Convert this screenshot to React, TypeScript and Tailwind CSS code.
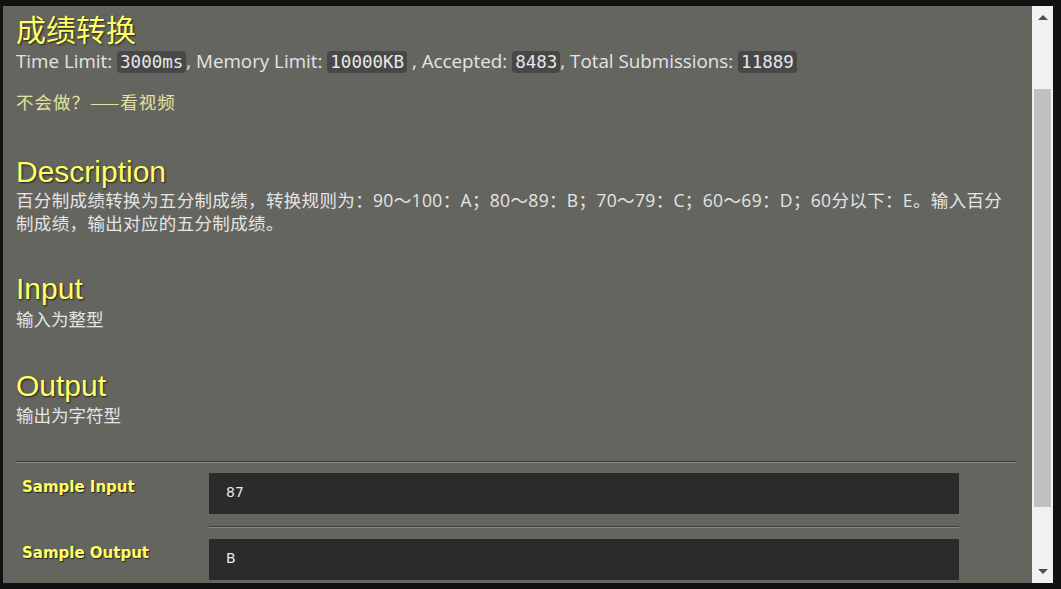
import React from "react";

const heading = "font-['Liberation_Sans',Arial,sans-serif] text-[30px] leading-[32px] text-[#ffff66] [text-shadow:1px_1px_2px_#1e1e1e]";
const body = "font-['Open_Sans','Noto_Sans_CJK_SC',sans-serif] text-[17.5px] text-[#e4e4e4]";
const badge = "inline-block rounded-[4px] bg-[#474747] px-[3px] py-[1px] font-['DejaVu_Sans_Mono',monospace] text-[17.5px] leading-[20px] text-[#e8e8e8]";
const label = "pl-[6px] pt-[4px] font-['DejaVu_Sans',sans-serif] text-[15px] font-bold leading-[20px] text-[#ffff66] [text-shadow:1px_1px_1px_#222]";
const sample = "bg-[#2b2b2b] pl-[17px] pt-[9px] font-['DejaVu_Sans',sans-serif] text-[14px] leading-[20px] text-[#e8e8e8]";
const rule = "h-[2px] border-t border-b border-t-[#3e3e3a] border-b-[#8a8a84]";

function Badge({ children }: { children: React.ReactNode }) {
  return <code className={badge}>{children}</code>;
}

function Scrollbar() {
  return (
    <div className="relative w-[21px] shrink-0 bg-[#f1f1f1]">
      <div className="absolute left-1/2 top-[9px] -translate-x-1/2 h-0 w-0 border-x-[5px] border-b-[5px] border-x-transparent border-b-[#505050]" />
      <div className="absolute left-[2px] right-[2px] top-[83px] h-[418px] bg-[#c1c1c1]" />
      <div className="absolute left-1/2 bottom-[9px] -translate-x-1/2 h-0 w-0 border-x-[5px] border-t-[5px] border-x-transparent border-t-[#505050]" />
    </div>
  );
}

export default function App() {
  return (
    <div className="flex h-[589px] w-[1061px] bg-[#111111] pt-[6px] pb-[6px] pl-[3px] pr-[8px]">
      <div className="flex-1 overflow-hidden bg-[#656560] pl-[13px] pr-[16px] pt-[6px]">
        <h1 className={heading + " font-['Noto_Sans_CJK_SC',sans-serif]"}>成绩转换</h1>
        <div className="mt-[5px] h-[24px] font-['Open_Sans',sans-serif] text-[18.8px] leading-[24px] text-[#e4e4e4]">
          Time Limit: <Badge>3000ms</Badge>, Memory Limit: <Badge>10000KB</Badge> , Accepted: <Badge>8483</Badge>, Total Submissions: <Badge>11889</Badge>
        </div>
        <div className="mt-[17px] h-[24px] font-['Noto_Sans_CJK_SC',sans-serif] text-[17.5px] leading-[24px] tracking-[1px] text-[#e2e29c]">不会做？——看视频</div>

        <h2 className={heading + " mt-[42px]"}>Description</h2>
        <p className={body + " mt-[1px] leading-[23px] tracking-[0.35px]"}>
          百分制成绩转换为五分制成绩，转换规则为：90～100：A；80～89：B；70～79：C；60～69：D；60分以下：E。输入百分制成绩，输出对应的五分制成绩。
        </p>

        <h2 className={heading + " mt-[38px]"}>Input</h2>
        <p className={body + " mt-[3px] leading-[22px]"}>输入为整型</p>

        <h2 className={heading + " mt-[40px]"}>Output</h2>
        <p className={body + " mt-[2px] leading-[22px]"}>输出为字符型</p>

        <div className={rule + " mt-[35px]"} />

        <div className="mt-[10px] grid grid-cols-[193px_750px]">
          <div className={label}>Sample Input</div>
          <div className={sample + " h-[41px]"}>87</div>
          <div />
          <div className="mt-[12px] mb-[11px] h-[2px] border-t border-b border-t-[#3e3e3a] border-b-[#8a8a84]" />
          <div className={label}>Sample Output</div>
          <div className={sample + " h-[41px]"}>B</div>
        </div>
      </div>
      <Scrollbar />
    </div>
  );
}
